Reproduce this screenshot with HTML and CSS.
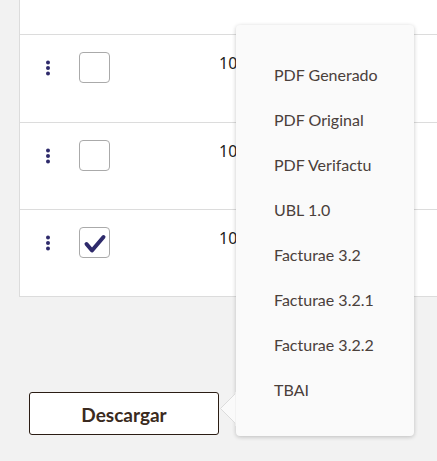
FILE: index.html
```html
<!DOCTYPE html>
<html lang="es">
<head>
<meta charset="utf-8">
<link rel="stylesheet" href="styles.css">
</head>
<body>
<div class="card">
  <div class="top"></div>
  <div class="row r1">
    <svg class="kebab" width="6" height="16" viewBox="0 0 6 16"><circle cx="3" cy="2.5" r="2"/><circle cx="3" cy="8" r="2"/><circle cx="3" cy="13.5" r="2"/></svg>
    <span class="check"></span>
    <span class="num">10</span>
  </div>
  <div class="row">
    <svg class="kebab" width="6" height="16" viewBox="0 0 6 16"><circle cx="3" cy="2.5" r="2"/><circle cx="3" cy="8" r="2"/><circle cx="3" cy="13.5" r="2"/></svg>
    <span class="check"></span>
    <span class="num">10</span>
  </div>
  <div class="row last">
    <svg class="kebab" width="6" height="16" viewBox="0 0 6 16"><circle cx="3" cy="2.5" r="2"/><circle cx="3" cy="8" r="2"/><circle cx="3" cy="13.5" r="2"/></svg>
    <span class="check"><svg width="31" height="31" viewBox="0 0 31 31"><path d="M7.5 17 L13 23.5 L24.5 10" fill="none" stroke="#2e2a6b" stroke-width="4" stroke-linecap="round" stroke-linejoin="round"/></svg></span>
    <span class="num">10</span>
  </div>
</div>
<div class="footer">
  <button class="btn">Descargar</button>
</div>
<div class="menu">
  <div class="item">PDF Generado</div>
  <div class="item">PDF Original</div>
  <div class="item">PDF Verifactu</div>
  <div class="item">UBL 1.0</div>
  <div class="item">Facturae 3.2</div>
  <div class="item">Facturae 3.2.1</div>
  <div class="item">Facturae 3.2.2</div>
  <div class="item">TBAI</div>
</div>
<svg class="arrow" width="18" height="34" viewBox="0 0 18 34"><polygon points="17,1 1.5,16.5 17,32" fill="#fafafa" stroke="#dcdcdc" stroke-width="1"/><rect x="16.5" y="0" width="2" height="34" fill="#fafafa"/></svg>
</body>
</html>
```
FILE: styles.css
```css
html, body {
  margin: 0;
  padding: 0;
  background: #f2f2f2;
  font-family: "Source Sans Pro", Lato, "Open Sans", sans-serif;
  width: 437px;
  height: 461px;
  overflow: hidden;
  position: relative;
}
.card {
  margin-left: 19px;
  width: 418px;
  background: #fff;
  border-left: 1px solid #dcdcdc;
  border-bottom: 1px solid #dcdcdc;
}
.top {
  height: 34px;
  border-bottom: 1px solid #dcdcdc;
}
.row {
  height: 87px;
  border-bottom: 1px solid #dcdcdc;
  display: flex;
  align-items: flex-start;
  box-sizing: border-box;
}
.row.r1 {
  height: 88px;
}
.row.last {
  border-bottom: none;
  height: 86px;
}
.kebab {
  fill: #2e2a6b;
  margin-left: 25px;
  margin-top: 25px;
}
.check {
  width: 29px;
  height: 29px;
  border: 1px solid #aaa;
  border-radius: 4px;
  margin-left: 28px;
  margin-top: 17px;
  display: block;
  position: relative;
}
.check svg {
  position: absolute;
  left: -1px;
  top: -1px;
}
.num {
  margin-left: 109px;
  margin-top: 18px;
  font-family: "Noto Sans", sans-serif;
  font-size: 16px;
  line-height: 20px;
  color: #222;
}
.footer {
  padding-left: 29px;
  padding-top: 95px;
}
.btn {
  width: 190px;
  height: 43px;
  background: #fff;
  border: 1px solid #2b1d14;
  border-radius: 3px;
  font-family: "Source Sans Pro", Lato, "Open Sans", sans-serif;
  font-weight: 700;
  font-size: 19px;
  color: #3a2a20;
  padding: 0;
  padding-top: 2px;
}
.menu {
  position: absolute;
  left: 236px;
  top: 25px;
  width: 178px;
  height: 411px;
  background: #fafafa;
  border-radius: 4px;
  box-shadow: 0 1px 4px rgba(0,0,0,0.22);
  padding-top: 27px;
  box-sizing: border-box;
}
.item {
  height: 45px;
  line-height: 45px;
  padding-left: 38px;
  font-size: 16px;
  color: #4a403b;
}
.arrow {
  position: absolute;
  left: 219px;
  top: 392px;
}
```
